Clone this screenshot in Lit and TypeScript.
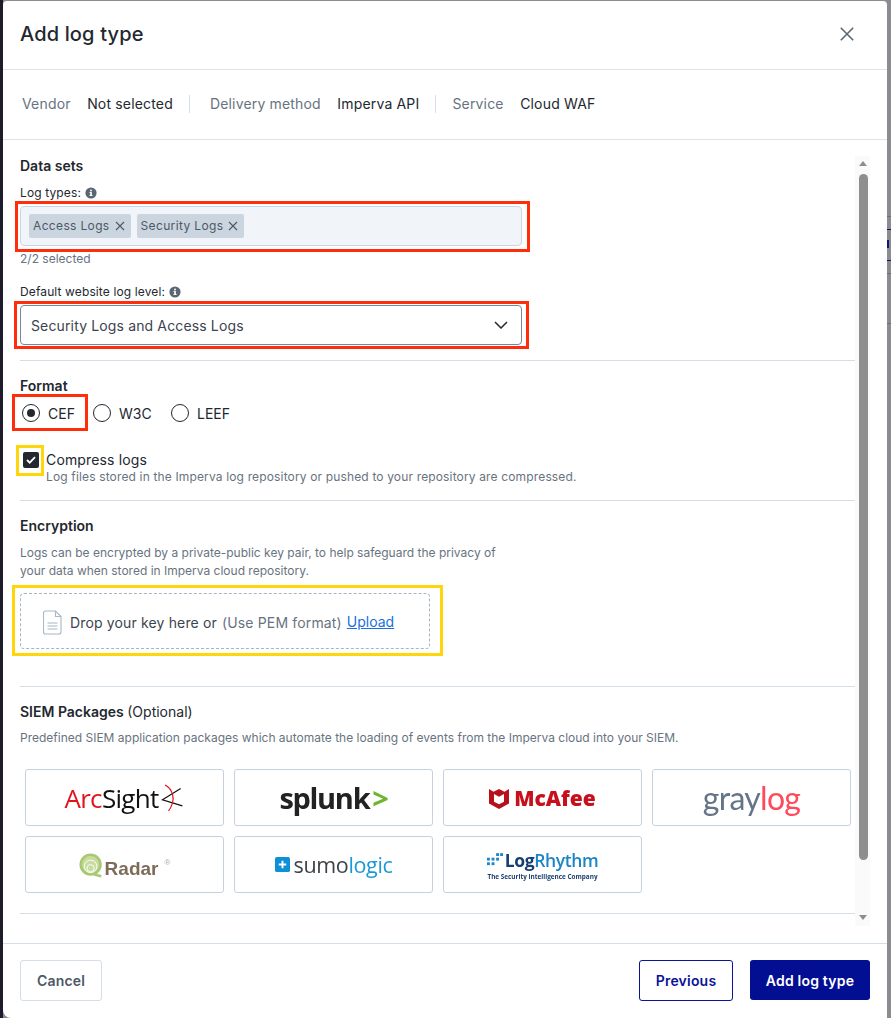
import { LitElement, html, css } from "lit";
import { customElement } from "lit/decorators.js";

const infoIcon = html`<svg class="info" viewBox="0 0 12 12" width="12" height="12"><circle cx="6" cy="6" r="5.6" fill="#5b6673"/><rect x="5.2" y="5.2" width="1.7" height="3.6" fill="#fff"/><rect x="4.4" y="8.1" width="3.2" height="0.9" fill="#fff"/><rect x="4.5" y="5.1" width="1.6" height="0.9" fill="#fff"/><circle cx="6" cy="3.5" r="0.95" fill="#fff"/></svg>`;
const tagX = html`<svg viewBox="0 0 10 10" width="10" height="10"><path d="M1 1l8 8M9 1l-8 8" stroke="#4d5866" stroke-width="1.1" fill="none"/></svg>`;

@customElement("app-root")
export class AppRoot extends LitElement {
  static styles = css`
    :host { display: block; width: 891px; height: 1018px; overflow: hidden; font-family: Inter, "Noto Sans", sans-serif; color: #23282f; }
    * { box-sizing: border-box; }
    .backdrop { position: relative; height: 1018px; padding: 1px 4px 0 3px; background: #8c8c90; }
    .left-strip { position: absolute; left: 0; top: 0; bottom: 0; width: 3px; background: #1c1c2c; }
    .bg-line { position: absolute; left: 887px; width: 4px; height: 1px; background: #6d6d75; }
    .bg-line.navy { background: #12127a; }
    .bg-mark { position: absolute; left: 887px; top: 240px; width: 2px; height: 8px; background: #12127a; }
    .modal { position: relative; height: 1017px; background: #fff; border-radius: 4px 4px 0 8px; display: flex; flex-direction: column; overflow: hidden; }
    header { flex: 0 0 69px; display: flex; align-items: center; justify-content: space-between; padding: 0 33px 3px 17px; border-bottom: 1px solid #dde3ea; }
    h1 { margin: 0; font-size: 20px; font-weight: 500; color: #23282f; letter-spacing: 0.15px; }
    .summary { flex: 0 0 70px; display: flex; align-items: center; padding: 0 0 1px 19px; border-bottom: 1px solid #dde3ea; font-size: 14px; line-height: 18px; letter-spacing: 0.17px; }
    .k { color: #687380; margin-right: 16.5px; }
    .v { color: #23282f; }
    .sep { width: 1px; height: 18px; background: #d6dee8; margin: 0 20px 0 16px; }
    .sep.b { margin: 0 16px 0 16px; }
    .body { flex: 1; position: relative; padding: 17px 32px 0 17px; overflow: hidden; }
    h2 { margin: 0; font-size: 14px; line-height: 18px; font-weight: 600; color: #23282f; }
    h2 span { font-weight: 400; }
    label.f { display: flex; align-items: center; gap: 4px; font-size: 12px; line-height: 16px; color: #23282f; letter-spacing: 0.12px; }
    .info { display: block; }
    .field { position: relative; height: 40px; width: 502px; border: 1px solid #cbd5e0; border-radius: 4px; background: #f1f4f9; display: flex; align-items: center; gap: 6px; padding: 0 8px; margin-top: 5px; }
    .tag { height: 24px; background: #cbd5e0; border-radius: 2px; display: flex; align-items: center; gap: 5px; padding: 0 6px 1px 4px; font-size: 12px; letter-spacing: 0.35px; color: #4d5866; }
    .hint { font-size: 12px; line-height: 16px; color: #687380; margin-top: 5px; }
    .select { position: relative; height: 40px; width: 502px; border: 1px solid #7b8794; border-radius: 4px; background: #fff; display: flex; align-items: center; justify-content: space-between; padding: 0 13px 0 10px; font-size: 14px; letter-spacing: 0.14px; color: #3c444e; margin-top: 5px; }
    .note-red::after, .note-yellow::after { content: ""; position: absolute; pointer-events: none; }
    .note-red::after { border: 3px solid #ff2d0a; }
    .note-yellow::after { border: 3px solid #ffd60a; }
    .field::after { inset: -6px -9px -7px -6px; }
    .select::after { inset: -5px -8px -5px -7px; }
    hr { border: 0; border-top: 1px solid #d5dde6; margin: 0; width: 835px; }
    .radios { position: relative; display: flex; align-items: center; height: 24px; margin-top: 6px; font-size: 14px; color: #23282f; }
    .radio { width: 18px; height: 18px; border: 1px solid #23282f; border-radius: 50%; flex: none; display: flex; align-items: center; justify-content: center; }
    .radio i { width: 8px; height: 8px; background: #23282f; border-radius: 50%; display: block; }
    .opt { position: relative; display: flex; align-items: center; gap: 8px; }
    .opt.cef { margin-left: 2px; width: 71px; }
    .opt.w3c { width: 78px; }
    .opt.cef::after { inset: -10px 5px -9px -10px; }
    .check-row { display: flex; gap: 7px; margin-top: 23px; padding-left: 3px; }
    .box { position: relative; flex: none; width: 16px; height: 16px; margin-top: 4px; background: #23282f; border-radius: 2px; display: flex; align-items: center; justify-content: center; }
    .box::after { inset: -7px -5px -8px -7px; }
    .check-text { font-size: 14px; line-height: 17px; letter-spacing: 0.15px; }
    .check-text div { font-size: 12px; line-height: 15px; color: #687380; }
    .check-title { padding-top: 3px; font-size: 14px !important; line-height: 18px !important; color: #23282f !important; }
    .para { font-size: 12px; line-height: 18px; color: #687380; margin: 0; }
    .drop { position: relative; width: 410px; height: 56px; border: 1px dashed #a9b4c1; border-radius: 4px; display: flex; align-items: center; padding: 2px 0 0 22px; font-size: 14px; letter-spacing: 0.15px; color: #3c444e; }
    .drop svg { margin-right: 8px; }
    .drop::after { inset: -9px -14px -8px -9px; }
    .drop em { font-style: normal; color: #687380; margin-left: 5px; }
    .drop a { color: #1a6fe0; text-decoration: underline; margin-left: 5px; position: relative; top: -1px; letter-spacing: 0; }
    .grid { display: grid; grid-template-columns: repeat(4, 199px); grid-auto-rows: 57px; gap: 10px; margin: 22px 0 20px 5px; }
    .card { border: 1px solid #c5d1df; border-radius: 3px; background: #fff; display: flex; align-items: center; justify-content: center; overflow: hidden; white-space: nowrap; }
    .logo { display: flex; align-items: center; filter: blur(0.35px); }
    .arc { font-family: "Open Sans", sans-serif; font-weight: 400; font-size: 26px; letter-spacing: -0.7px; color: #111; }
    .arc b { font-weight: 400; color: #e0141c; }
    .spl { font-family: "Open Sans", sans-serif; font-weight: 700; font-size: 29px; letter-spacing: -1.3px; color: #222; }
    .spl b { color: #6cb52d; font-weight: 700; margin-left: 3px; }
    .mca { font-family: "Open Sans", sans-serif; font-weight: 800; font-size: 21px; letter-spacing: 0px; color: #c8101c; gap: 5px; }
    .gry { font-family: Lato, sans-serif; font-weight: 400; font-size: 32px; letter-spacing: -0.7px; color: #667488; margin-top: -1px; }
    .gry b { font-weight: 400; color: #ff4a5c; }
    .rad { font-family: "Liberation Sans", sans-serif; font-weight: 700; font-size: 19px; color: #7e6c58; align-items: flex-end; margin-top: 3px; }
    .rad svg { margin: 0 1px 2px 0; }
    .rad sup { font-size: 8px; color: #aaa; margin: 0 0 13px 6px; font-weight: 400; line-height: 8px; }
    .sumo { font-family: "Open Sans", sans-serif; font-weight: 400; font-size: 21.5px; letter-spacing: -0.35px; color: #3e4347; gap: 4px; }
    .sumo b { font-weight: 400; color: #1a98d8; }
    .lr { flex-direction: column; align-items: center; }
    .lr-top { display: flex; align-items: center; gap: 2px; font-family: "Open Sans", sans-serif; font-weight: 700; font-size: 17.5px; letter-spacing: -0.4px; line-height: 22px; color: #173f73; }
    .lr-top b { color: #1b85c7; font-weight: 600; }
    .lr-sub { font-family: "Open Sans", sans-serif; font-weight: 700; font-size: 6.4px; line-height: 9px; color: #1d3f70; margin-top: 1px; }
    .sb { position: absolute; left: 852px; top: 16px; width: 15px; height: 770px; background: #fafafa; }
    .thumb { position: absolute; left: 4px; top: 18px; width: 8.5px; height: 686px; border-radius: 5px; background: #8e8e8e; }
    .arrow { position: absolute; left: 4px; width: 0; height: 0; border-left: 4px solid transparent; border-right: 4px solid transparent; }
    .arrow.up { top: 5px; border-bottom: 5px solid #8e8e8e; }
    .arrow.down { bottom: 6px; border-top: 5px solid #8e8e8e; }
    footer { flex: 0 0 75px; border-top: 1px solid #d5dde6; display: flex; align-items: flex-start; justify-content: space-between; padding: 16px 17px 0 17px; }
    .btn { height: 41px; border-radius: 3px; font: 600 14px Inter, sans-serif; letter-spacing: 0.2px; display: flex; align-items: center; justify-content: center; background: #fff; }
    .cancel { width: 82px; border: 1px solid #d5dde6; color: #4d5866; }
    .right { display: flex; gap: 17px; }
    .prev { width: 94px; border: 1px solid #0a1496; color: #0a1496; }
    .add { width: 120px; height: 40px; background: #030f92; color: #fff; border: 0; }
  `;

  render() {
    return html`<div class="backdrop">
      <div class="left-strip"></div>
      ${[216, 323, 273].map((y) => html`<div class="bg-line" style="top:${y}px"></div>`)}
      ${[229, 260].map((y) => html`<div class="bg-line navy" style="top:${y}px"></div>`)}
      <div class="bg-mark"></div>
      <div class="modal">
        <header>
          <h1>Add log type</h1>
          <svg viewBox="0 0 14 14" width="14" height="14"><path d="M.8.8l12.4 12.4M13.2.8L.8 13.2" stroke="#5a6673" stroke-width="1.6" fill="none"/></svg>
        </header>
        <div class="summary">
          <span class="k">Vendor</span><span class="v">Not selected</span><span class="sep"></span>
          <span class="k">Delivery method</span><span class="v">Imperva API</span><span class="sep b"></span>
          <span class="k">Service</span><span class="v">Cloud WAF</span>
        </div>
        <div class="body">
          <h2>Data sets</h2>
          <label class="f" style="margin-top:10px">Log types: ${infoIcon}</label>
          <div class="field note-red">
            <span class="tag">Access Logs ${tagX}</span>
            <span class="tag">Security Logs ${tagX}</span>
          </div>
          <div class="hint">2/2 selected</div>
          <label class="f" style="margin-top:17px">Default website log level: ${infoIcon}</label>
          <div class="select note-red">
            <span>Security Logs and Access Logs</span>
            <svg viewBox="0 0 14 8" width="14" height="8"><path d="M1 1l6 6 6-6" stroke="#23282f" stroke-width="1.5" fill="none"/></svg>
          </div>
          <hr style="margin-top:15px" />
          <h2 style="margin-top:16px">Format</h2>
          <div class="radios">
            <div class="opt cef note-red"><span class="radio"><i></i></span>CEF</div>
            <div class="opt w3c"><span class="radio"></span>W3C</div>
            <div class="opt"><span class="radio"></span>LEEF</div>
          </div>
          <div class="check-row">
            <span class="box note-yellow"><svg viewBox="0 0 10 8" width="10" height="8"><path d="M1 4l2.7 2.7L9 1.2" stroke="#fff" stroke-width="1.8" fill="none"/></svg></span>
            <div class="check-text">
              <div class="check-title">Compress logs</div>
              <div>Log files stored in the Imperva log repository or pushed to your repository are compressed.</div>
            </div>
          </div>
          <hr style="margin-top:16px" />
          <h2 style="margin-top:16px">Encryption</h2>
          <p class="para" style="margin-top:9px">Logs can be encrypted by a private-public key pair, to help safeguard the privacy of<br />your data when stored in Imperva cloud repository.</p>
          <div class="drop note-yellow" style="margin-top:13px">
            <svg viewBox="0 0 19 25" width="19" height="25"><path d="M2.5 1h10l5.5 5.5V22a2 2 0 0 1-2 2H2.500a2 2 0 0 1-2-2V3a2 2 0 0 1 2-2zM12.500 1v5.500H18M4.500 13h10M4.500 16h10M4.500 19h10" stroke="#a9b6c6" stroke-width="1.1" fill="#fff"/></svg>
            Drop your key here or <em>(Use PEM format)</em> <a>Upload</a>
          </div>
          <hr style="margin-top:37px" />
          <h2 style="margin-top:16px">SIEM Packages <span>(Optional)</span></h2>
          <p class="para" style="margin-top:8px">Predefined SIEM application packages which automate the loading of events from the Imperva cloud into your SIEM.</p>
          <div class="grid">
            <div class="card"><div class="logo arc"><b>Arc</b>Sight<svg viewBox="0 0 30 36" width="26" height="32"><path d="M25 7L4 20l23 7" stroke="#111" stroke-width="1.4" fill="none"/><path d="M7 3c8 4 14 16 4 30" stroke="#e0141c" stroke-width="1.4" fill="none"/></svg></div></div>
            <div class="card"><div class="logo spl">splunk<b>&gt;</b></div></div>
            <div class="card"><div class="logo mca"><svg viewBox="0 0 22 24" width="20" height="22"><path d="M0 2l5 3 6-3 6 3 5-3v16l-11 6L0 18z" fill="#b8101a"/><path d="M5.500 7.500l5.500 3 5.500-3v8.500L11 19l-5.500-3z" fill="#fff"/></svg>McAfee</div></div>
            <div class="card"><div class="logo gry">gray<b>log</b></div></div>
            <div class="card"><div class="logo rad"><svg viewBox="0 0 28 28" width="25" height="25"><circle cx="13" cy="13" r="11" fill="#c9dc9f" stroke="#a9c873" stroke-width="3"/><circle cx="13" cy="15" r="7" fill="none" stroke="#fff" stroke-width="1"/><circle cx="13" cy="17" r="4" fill="none" stroke="#fff" stroke-width="1"/><path d="M17 24l8 2" stroke="#a9c873" stroke-width="3"/></svg>Radar<sup>®</sup></div></div>
            <div class="card"><div class="logo sumo"><svg viewBox="0 0 16 16" width="15" height="15"><rect width="16" height="16" rx="2" fill="#0f8fd6"/><path d="M8 4v8M4 8h8" stroke="#fff" stroke-width="2"/></svg><span>sumo<b>logic</b></span></div></div>
            <div class="card"><div class="logo lr"><div class="lr-top"><svg viewBox="0 0 14 12" width="16" height="14" fill="#1b85c7"><rect x="0" y="4" width="2.500" height="2.500"/><rect x="0" y="8" width="2.500" height="2.500"/><rect x="4" y="4" width="2.500" height="2.500"/><rect x="4" y="8" width="2.500" height="2.500"/><rect x="8" y="0" width="2.500" height="2.500"/><rect x="8" y="4" width="2.500" height="2.500"/><rect x="11.500" y="0" width="2.500" height="2.500"/></svg><span>Log<b>Rhythm</b></span></div><div class="lr-sub">The Security Intelligence Company</div></div></div>
          </div>
          <hr />
          <div class="sb"><div class="arrow up"></div><div class="thumb"></div><div class="arrow down"></div></div>
        </div>
        <footer>
          <button class="btn cancel">Cancel</button>
          <div class="right"><button class="btn prev">Previous</button><button class="btn add">Add log type</button></div>
        </footer>
      </div>
    </div>`;
  }
}
